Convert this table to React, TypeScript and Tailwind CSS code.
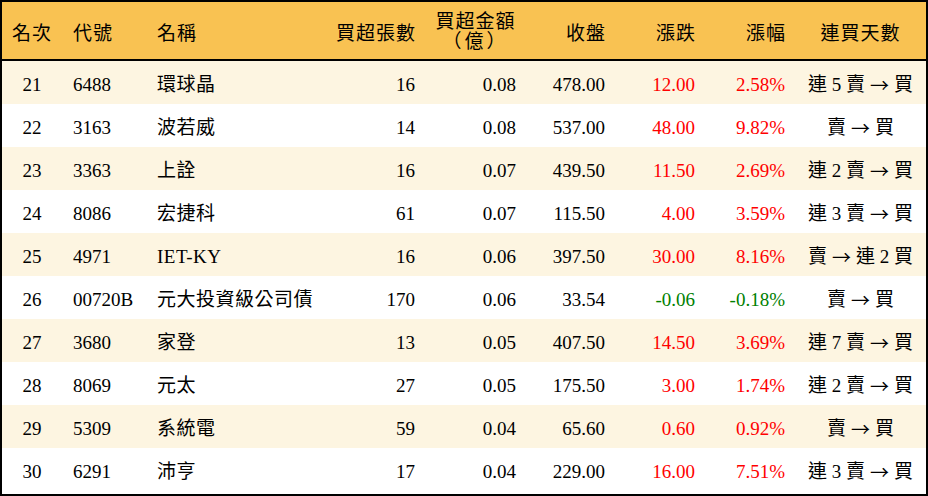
const rows = [
  { rank: 21, code: "6488", name: "環球晶", lots: 16, amount: "0.08", close: "478.00", chg: "12.00", pct: "2.58%", streak: ["連 5 賣", "買"] },
  { rank: 22, code: "3163", name: "波若威", lots: 14, amount: "0.08", close: "537.00", chg: "48.00", pct: "9.82%", streak: ["賣", "買"] },
  { rank: 23, code: "3363", name: "上詮", lots: 16, amount: "0.07", close: "439.50", chg: "11.50", pct: "2.69%", streak: ["連 2 賣", "買"] },
  { rank: 24, code: "8086", name: "宏捷科", lots: 61, amount: "0.07", close: "115.50", chg: "4.00", pct: "3.59%", streak: ["連 3 賣", "買"] },
  { rank: 25, code: "4971", name: "IET-KY", lots: 16, amount: "0.06", close: "397.50", chg: "30.00", pct: "8.16%", streak: ["賣", "連 2 買"] },
  { rank: 26, code: "00720B", name: "元大投資級公司債", lots: 170, amount: "0.06", close: "33.54", chg: "-0.06", pct: "-0.18%", streak: ["賣", "買"] },
  { rank: 27, code: "3680", name: "家登", lots: 13, amount: "0.05", close: "407.50", chg: "14.50", pct: "3.69%", streak: ["連 7 賣", "買"] },
  { rank: 28, code: "8069", name: "元太", lots: 27, amount: "0.05", close: "175.50", chg: "3.00", pct: "1.74%", streak: ["連 2 賣", "買"] },
  { rank: 29, code: "5309", name: "系統電", lots: 59, amount: "0.04", close: "65.60", chg: "0.60", pct: "0.92%", streak: ["賣", "買"] },
  { rank: 30, code: "6291", name: "沛亨", lots: 17, amount: "0.04", close: "229.00", chg: "16.00", pct: "7.51%", streak: ["連 3 賣", "買"] },
];

const cols = "grid grid-cols-[60px_85px_178px_100px_101px_89px_90px_90px_131px]";

export default function App() {
  return (
    <div
      className="w-[928px] h-[496px] bg-white border-2 border-black text-black text-[19px] leading-none"
      style={{ fontFamily: '"Liberation Serif", "Noto Sans CJK TC", serif' }}
    >
      {/* header */}
      <div className={`${cols} h-[59px] items-center pt-[5px] bg-[#f9c252] border-b-2 border-black tracking-[1px] whitespace-nowrap`}>
        <div className="text-center">名次</div>
        <div className="pl-[11px]">代號</div>
        <div className="pl-[10px]">名稱</div>
        <div className="text-right pr-[9px]">買超張數</div>
        <div className="text-center leading-[20px] -mt-[2px]">
          買超金額
          <br />
          <span className="tracking-[3px]">（億）</span>
        </div>
        <div className="text-right pr-[9px]">收盤</div>
        <div className="text-right pr-[9px]">漲跌</div>
        <div className="text-right pr-[9px]">漲幅</div>
        <div className="text-center">連買天數</div>
      </div>

      {rows.map((r, i) => {
        const down = r.chg.startsWith("-");
        const tone = down ? "text-[#008000]" : "text-[#ff0000]";
        return (
          <div
            key={r.rank}
            className={`${cols} h-[43px] items-center pt-[4px] whitespace-nowrap ${i % 2 === 0 ? "bg-[#fdf5e1]" : "bg-white"}`}
          >
            <div className="text-center">{r.rank}</div>
            <div className="pl-[11px]">{r.code}</div>
            <div className="pl-[10px] tracking-[0.5px]">{r.name}</div>
            <div className="text-right pr-[10px]">{r.lots}</div>
            <div className="text-right pr-[10px]">{r.amount}</div>
            <div className="text-right pr-[10px]">{r.close}</div>
            <div className={`text-right pr-[10px] ${tone}`}>{r.chg}</div>
            <div className={`text-right pr-[10px] ${tone}`}>{r.pct}</div>
            <div className="flex items-center justify-center gap-[5px]">
              <span>{r.streak[0]}</span>
              <span style={{ fontFamily: '"Noto Sans CJK TC", sans-serif' }}>→</span>
              <span>{r.streak[1]}</span>
            </div>
          </div>
        );
      })}
    </div>
  );
}
